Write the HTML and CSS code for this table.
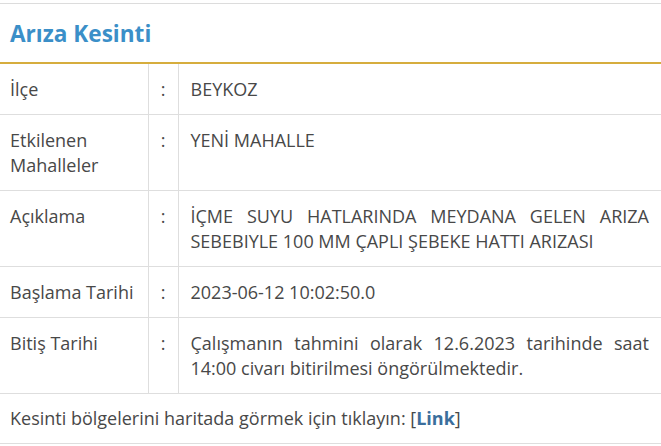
FILE: index.html
```html
<!DOCTYPE html>
<html lang="tr">
<head>
<meta charset="utf-8">
<link rel="stylesheet" href="styles.css">
</head>
<body>
<div class="panel">
  <h2 class="title">Arıza Kesinti</h2>
  <table class="info">
    <colgroup><col class="c1"><col class="c2"><col class="c3"></colgroup>
    <tr><td class="lbl">İlçe</td><td class="sep">:</td><td class="val">BEYKOZ</td></tr>
    <tr><td class="lbl">Etkilenen Mahalleler</td><td class="sep">:</td><td class="val">YENİ MAHALLE</td></tr>
    <tr><td class="lbl">Açıklama</td><td class="sep">:</td><td class="val">İÇME SUYU HATLARINDA MEYDANA GELEN ARIZA SEBEBIYLE 100 MM ÇAPLI ŞEBEKE HATTI ARIZASI</td></tr>
    <tr><td class="lbl">Başlama Tarihi</td><td class="sep">:</td><td class="val">2023-06-12 10:02:50.0</td></tr>
    <tr><td class="lbl">Bitiş Tarihi</td><td class="sep">:</td><td class="val">Çalışmanın tahmini olarak 12.6.2023 tarihinde saat 14:00 civarı bitirilmesi öngörülmektedir.</td></tr>
  </table>
  <p class="foot">Kesinti bölgelerini haritada görmek için tıklayın: [<a class="link" href="#">Link</a>]</p>
</div>
</body>
</html>
```

FILE: styles.css
```css
html, body {
  margin: 0;
  padding: 0;
  background: #fff;
}
body {
  font-family: "Open Sans", "Noto Sans", sans-serif;
  color: #484848;
  font-size: 18px;
}
.panel {
  margin-top: 3px;
  border-top: 1px solid #dcdcdc;
}
.title {
  margin: 0;
  padding: 16px 10px 14px;
  font-size: 22.6px;
  line-height: 28px;
  font-weight: 700;
  color: #3b8fc8;
  border-bottom: 2px solid #d6ad3d;
}
.info {
  width: 100%;
  border-collapse: collapse;
  table-layout: fixed;
}
.c1 { width: 148px; }
.c2 { width: 30px; }
.info td {
  vertical-align: top;
  line-height: 25px;
  padding: 13px 10px 12px 10px;
  border-bottom: 1px solid #dedede;
}
.info td.lbl {
  border-right: 1px solid #dedede;
}
.info td.sep {
  text-align: center;
  padding-left: 0;
  padding-right: 0;
  border-right: 1px solid #dedede;
}
.info td.val {
  padding-left: 12px;
  padding-right: 12px;
  text-align: justify;
}
.foot {
  margin: 0;
  padding: 12px 10px 12px;
  line-height: 25px;
  border-bottom: 1px solid #dedede;
}
.link {
  color: #3b6e9c;
  font-weight: 700;
  text-decoration: none;
}
```
